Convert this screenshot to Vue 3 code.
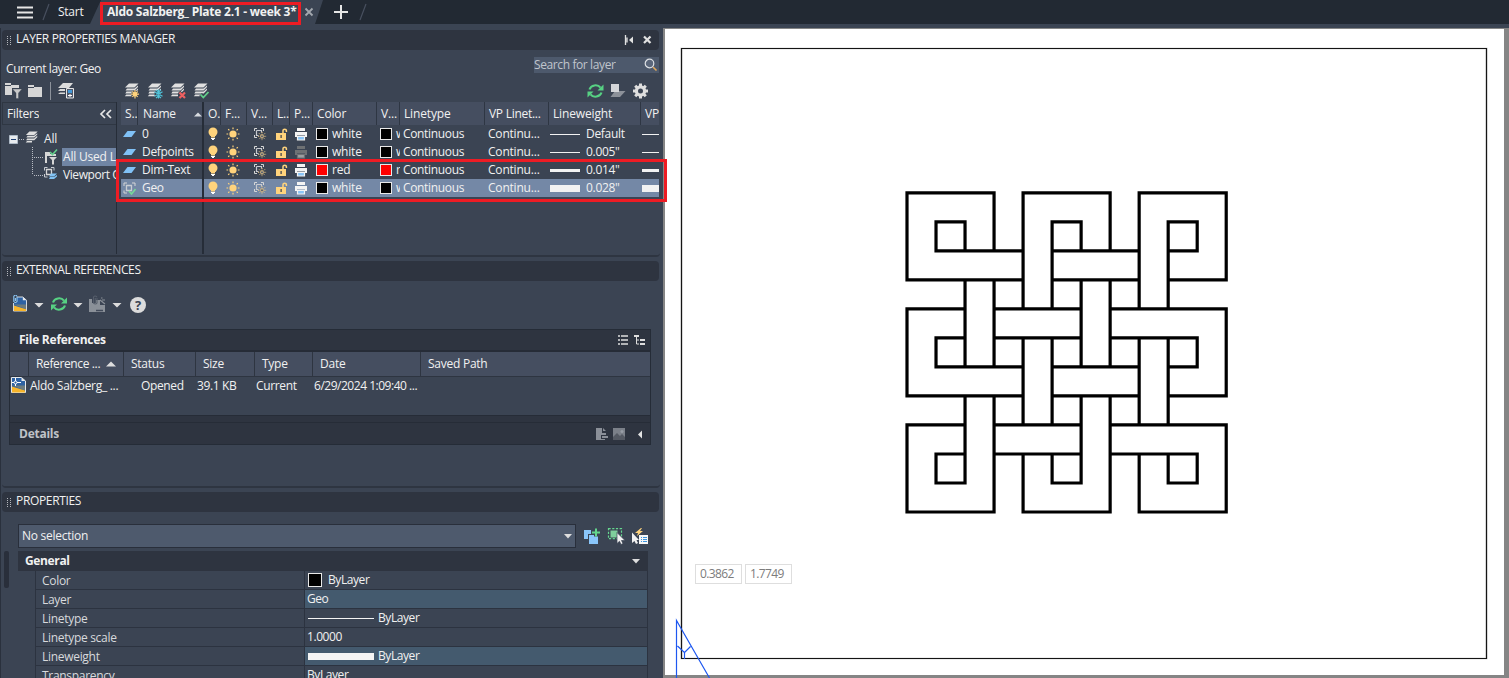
<script setup>
const columns = ['S..', 'Name', 'O.', 'F...', 'V...', 'L..', 'P...', 'Color', 'V...', 'Linetype', 'VP Linet...', 'Lineweight', 'VP']

const layers = [
  { name: '0', color: 'white', plot: true, weight: 'Default', thick: 1 },
  { name: 'Defpoints', color: 'white', plot: false, weight: '0.005"', thick: 1 },
  { name: 'Dim-Text', color: 'red', plot: true, weight: '0.014"', thick: 3 },
  { name: 'Geo', color: 'white', plot: true, weight: '0.028"', thick: 7, current: true }
]

const properties = [
  { label: 'Color', value: 'ByLayer', kind: 'chip' },
  { label: 'Layer', value: 'Geo', tint: true },
  { label: 'Linetype', value: 'ByLayer', kind: 'thin' },
  { label: 'Linetype scale', value: '1.0000' },
  { label: 'Lineweight', value: 'ByLayer', kind: 'thick', tint: true },
  { label: 'Transparency', value: 'ByLayer' }
]

// Edges of the interlaced knot on an 11 x 11 grid: for each line, its [from, to] runs.
const rowRuns = [
  [[0, 3], [4, 7], [8, 11]],
  [[1, 2], [5, 6], [9, 10]],
  [[1, 4], [5, 8], [9, 10]],
  [[0, 4], [5, 8], [9, 11]],
  [[0, 2], [3, 6], [7, 11]],
  [[1, 2], [3, 6], [7, 10]],
  [[1, 4], [5, 8], [9, 10]],
  [[0, 4], [5, 8], [9, 11]],
  [[0, 2], [3, 6], [7, 11]],
  [[1, 2], [3, 6], [7, 10]],
  [[1, 2], [5, 6], [9, 10]],
  [[0, 3], [4, 7], [8, 11]]
]
const columnRuns = [
  [[0, 3], [4, 7], [8, 11]],
  [[1, 2], [5, 6], [9, 10]],
  [[1, 2], [3, 6], [7, 10]],
  [[0, 2], [3, 6], [7, 11]],
  [[0, 4], [5, 8], [9, 11]],
  [[1, 4], [5, 8], [9, 10]],
  [[1, 2], [3, 6], [7, 10]],
  [[0, 2], [3, 6], [7, 11]],
  [[0, 4], [5, 8], [9, 11]],
  [[1, 4], [5, 8], [9, 10]],
  [[1, 2], [5, 6], [9, 10]],
  [[0, 3], [4, 7], [8, 11]]
]
const gx = n => (244 + n * 29.02).toFixed(2)
const gy = n => (164.8 + n * 29.02).toFixed(2)
const knot =
  rowRuns.flatMap((list, y) => list.map(([a, b]) => `M${gx(a)} ${gy(y)}H${gx(b)}`)).join('') +
  columnRuns.flatMap((list, x) => list.map(([a, b]) => `M${gx(x)} ${gy(a)}V${gy(b)}`)).join('')
</script>

<template>
  <div class="app">
    <svg class="defs" width="0" height="0">
      <symbol id="layers" viewBox="0 0 16 16">
        <path d="M5 .5h9.500l-4 4H1zM3 5.500h7.500L14 2.500v1.600L10.600 7.500H1.500zM2.500 8.500h8L14 5.500v1.600L10.600 10.500H1.300zM2.300 11.500H8v1.700H.8z" fill="#e0e0e0" />
      </symbol>
      <symbol id="refresh" viewBox="0 0 17 16">
        <path d="M2.500 6.500C4 2 10.500.8 13.500 4.600" fill="none" stroke="#57d183" stroke-width="2.100" />
        <path d="M16.500 1.500v6h-6z" fill="#57d183" />
        <path d="M14.500 9.500C13 14 6.500 15.200 3.500 11.400" fill="none" stroke="#57d183" stroke-width="2.100" />
        <path d="M.5 14.500v-6h6z" fill="#57d183" />
      </symbol>
      <symbol id="folder" viewBox="0 0 16 14">
        <path d="M0 1h6v2h8v10H0z" fill="#d6d6d6" /><path d="M0 3.500h6" stroke="#3b4453" />
      </symbol>
      <symbol id="bulb" viewBox="0 0 10 14">
        <circle cx="5" cy="5" r="4.500" fill="#ffd37c" /><path d="M3 8h4v2.500H3z" fill="#ffd37c" /><path d="M3 11h4v1H6v1H4v-1H3z" fill="#fff" />
      </symbol>
      <symbol id="sun" viewBox="0 0 14 14">
        <circle cx="7" cy="7" r="3.600" fill="#ffd37c" />
        <path d="M7 .5v1.700M7 11.800v1.700M.5 7h1.700M11.800 7h1.700M2.200 2.200l1.200 1.200M10.600 10.600l1.200 1.200M2.200 11.800l1.200-1.200M10.600 3.400l1.200-1.200" stroke="#ffd37c" stroke-width="1.200" />
      </symbol>
      <symbol id="vpfreeze" viewBox="0 0 14 14">
        <path d="M1.500 4V1.500H4M8 1.500h2.500V4M1.500 8v2.500H4" fill="none" stroke="#d6d6d6" stroke-width="1" />
        <path d="M3.500 3.500h5v2M3.500 3.500v5h2" fill="none" stroke="#c7cad0" stroke-width="1.200" />
        <path d="M9 5v8.500M5 9.300h8.500M6 6.300l6 6M12 6.300l-6 6" stroke="#e7c483" stroke-width="1" stroke-dasharray="1.300 .8" />
        <circle cx="9" cy="9.300" r="1.500" fill="#596273" stroke="#e7c483" stroke-width=".7" />
      </symbol>
      <symbol id="lock" viewBox="0 0 12 13">
        <path d="M0 5h10v7H0z" fill="#ffd37c" /><path d="M7 5V2.500Q7 1.300 8.700 1.300t1.700 1.200V4" fill="none" stroke="#ffd37c" stroke-width="1.500" /><path d="M4.500 7h1.200v3H4.500z" fill="#343c4a" />
      </symbol>
      <symbol id="printer" viewBox="0 0 14 13">
        <path d="M3 0h8v3H3zM1 4h12v5h-2V7.500H3V9H1z" fill="currentColor" /><path d="M3.500 8.500h7V12h-7z" fill="#8bc5f7" stroke="currentColor" stroke-width="1.200" />
      </symbol>
      <symbol id="drawing" viewBox="0 0 15 16">
        <path d="M.5.500h10L14.500 4v11.500H.5z" fill="#2e62a3" stroke="#e5e8eb" /><path d="M1 9.500l13 4v2H1z" fill="#f7b52b" /><path d="M1 8.500h13v5z" fill="#e2ab39" opacity=".35" /><path d="M10.500.5V4h4z" fill="#e5e8eb" />
      </symbol>
    </svg>

    <nav class="topbar">
      <svg class="tabs" width="400" height="28" viewBox="0 0 400 28">
        <path d="M101 0h222l-8 24v4H90v-4z" fill="#3b4453" />
        <path d="M17 7.500h16M17 12.500h16M17 17.500h16" stroke="#e6e6e6" stroke-width="2" />
        <path d="M49 4l-6 16M366 4l-6 16" stroke="#48505f" stroke-width="1.200" />
        <path d="M305.500 8.500l7 7M312.500 8.500l-7 7" stroke="#a3a8af" stroke-width="1.800" />
        <path d="M334 12h14M341 5v14" stroke="#e6e6e6" stroke-width="2" />
      </svg>
      <span class="tab start">Start</span>
      <span class="tab file">Aldo Salzberg_ Plate 2.1 - week 3*</span>
    </nav>

    <div class="workspace">
      <aside class="side">
        <section class="palette layer-palette">
          <header class="title">
            <i class="grip"></i><span>LAYER PROPERTIES MANAGER</span>
            <svg class="winctl" width="30" height="12" viewBox="0 0 30 12">
              <path d="M2.500 1v10M4 3.500v5" stroke="#e1e1e1" stroke-width="1.300" /><path d="M10 2.500v7L6 6z" fill="#e1e1e1" /><path d="M21 2.500l6.500 6.500M27.500 2.500L21 9" stroke="#e1e1e1" stroke-width="2.200" />
            </svg>
          </header>
          <div class="current">
            <span>Current layer: Geo</span>
            <div class="search">
              <span>Search for layer</span>
              <svg width="14" height="14" viewBox="0 0 14 14"><path d="M9 9l3.500 3.500" stroke="#e0a85c" stroke-width="1.600" /><circle cx="5.500" cy="5.500" r="4.300" fill="#5b677b" stroke="#dde0e4" stroke-width="1.200" /></svg>
            </div>
          </div>
          <div class="tools">
            <svg class="t1" width="19" height="16" viewBox="0 0 19 16"><path d="M1 0h6v2h8v3H8v7H1z" fill="#d6d6d6" /><path d="M1 2.500h6" stroke="#3b4453" /><path d="M8.500 6h9.500L14.500 10v5.500H12V10z" fill="#c9c9c9" stroke="#3b4453" stroke-width=".4" /></svg>
            <svg class="t2" width="16" height="14"><use href="#folder" /></svg>
            <i class="divider"></i>
            <svg class="t3" width="17" height="16" viewBox="0 0 17 16"><path d="M5 0h10l-4 5H0zM2 6h5v2H0zM2 9.500h5v1.500H0z" fill="#dcdcdc" /><path d="M8.500 5.500h7v9.500h-7z" fill="#4e5769" stroke="#e5e5e5" /><path d="M10 7h4v3h-4z" fill="#4399d9" /><path d="M10 12.500h4M12 11v3" stroke="#fff" /></svg>
            <svg class="t4" width="86" height="17" viewBox="0 0 86 17">
              <use href="#layers" width="16" height="16" /><use href="#layers" x="23" width="16" height="16" /><use href="#layers" x="46" width="16" height="16" /><use href="#layers" x="69" width="16" height="16" />
              <circle cx="11" cy="11.200" r="3.800" fill="#3b4453" />
              <path d="M11 7v8.500M7 11.200h8M8.300 8.500l5.400 5.400M13.700 8.500l-5.400 5.400" stroke="#ffd37c" stroke-width="1.200" /><circle cx="11" cy="11.200" r="2.200" fill="#ffd37c" />
              <circle cx="34.500" cy="11" r="4" fill="#3b4453" />
              <path d="M34.500 6.500v9M30.500 8.800l8 4.500M38.500 8.800l-8 4.500M32 7l2.500 2L37 7M32 15l2.500-2 2.500 2" fill="none" stroke="#50c4da" stroke-width="1.100" /><circle cx="34.500" cy="11" r="1.700" fill="none" stroke="#50c4da" />
              <path d="M55 9l6 6M61 9l-6 6" stroke="#3b4453" stroke-width="3.800" /><path d="M55.500 9.500l5.500 5.500M61 9.500L55.500 15" stroke="#ee6060" stroke-width="2.200" />
              <path d="M76.500 11.500l3 3L84.500 9" fill="none" stroke="#3b4453" stroke-width="4" /><path d="M76.500 11.500l2.800 3L84.500 9" fill="none" stroke="#62cf8b" stroke-width="1.800" />
            </svg>
            <svg class="t5" width="63" height="17" viewBox="0 0 63 17">
              <use href="#refresh" x="0" y="0" width="17" height="16" />
              <path d="M28 8h10.500l-5.500 6H23.500z" fill="#8c9199" /><path d="M24 1h8v8h-8z" fill="#d4d6d9" />
              <g fill="none" stroke="#dedede"><circle cx="53.500" cy="8" r="4.100" stroke-width="3.200" /><path d="M53.500.5v3M53.500 12.500v3M46 8h3M58 8h3M48.200 2.700l2 2M56.800 11.300l2 2M48.200 13.300l2-2M56.800 4.700l2-2" stroke-width="3" /></g>
            </svg>
          </div>

          <div class="layer-area">
            <div class="filters">
              <div class="filter-head"><span>Filters</span><svg width="13" height="10" viewBox="0 0 13 10"><path d="M6 1L2 5l4 4M12 1L8 5l4 4" fill="none" stroke="#e6e6e6" stroke-width="1.700" /></svg></div>
              <div class="tree">
                <svg class="twig" width="62" height="58" viewBox="0 0 62 58">
                  <path d="M7.500 10.500h8v8h-8z" fill="#e8ecef" stroke="#aebac7" /><path d="M9 14.500h5" stroke="#1d3f73" />
                  <path d="M17 14.500h6M30.500 22v28M32 32.500h10M32 50.500h10" stroke="#b8bcc4" stroke-dasharray="1 1" />
                  <use href="#layers" x="23" y="6" width="14" height="14" />
                  <path d="M43 27h5v2h6v2h-9v7h-2z" fill="#d6d6d6" /><path d="M47 32h8l-3 3v4.500h-2V35z" fill="#d6d6d6" /><path d="M48 27l2.500 2.500 4.500-5" fill="none" stroke="#62cf8b" stroke-width="1.600" />
                  <path d="M42.500 45.500v-3h3M49 42.500h3v3M42.500 49v3h3" fill="none" stroke="#c7cbd1" /><path d="M44.500 44.500h5v5h-5z" fill="none" stroke="#d6d6d6" stroke-width="1.300" /><path d="M49 48.500h6l-3 3h-5zM48 52h4l3-2v1.500L52 54h-5z" fill="#82c3f5" />
                </svg>
                <span class="n-all">All</span>
                <span class="n-used">All Used L</span>
                <span class="n-view">Viewport O</span>
              </div>
            </div>

            <div class="grid">
              <div class="row head">
                <span v-for="(c, i) in columns" :key="i" :class="'c' + i">{{ c }}</span>
                <svg class="sort" width="8" height="5"><path d="M0 4.500L4 .5l4 4z" fill="#d8dbe0" /></svg>
              </div>
              <div v-for="l in layers" :key="l.name" class="row" :class="{ selected: l.current }">
                <span class="ico status">
                  <svg v-if="!l.current" width="13" height="8" viewBox="0 0 13 8"><path d="M4.500 1H13L8.500 7H0z" fill="#80c1f6" /></svg>
                  <svg v-else width="13" height="13" viewBox="0 0 13 13"><path d="M1 4V1h3M9 1h3v3M1 8.500V11h3" fill="none" stroke="#d6d6d6" /><path d="M3.500 3.500h5v5h-5z" fill="none" stroke="#c9cdd3" stroke-width="1.300" /><path d="M6 9l2.500 3L12.500 7" fill="none" stroke="#75d997" stroke-width="1.600" /></svg>
                </span>
                <span class="name">{{ l.name }}</span>
                <span class="ico"><svg width="10" height="14"><use href="#bulb" /></svg></span>
                <span class="ico sun"><svg width="14" height="14"><use href="#sun" /></svg></span>
                <span class="ico"><svg width="14" height="14"><use href="#vpfreeze" /></svg></span>
                <span class="ico lock"><svg width="12" height="13"><use href="#lock" /></svg></span>
                <span class="ico plot" :class="{ off: !l.plot }"><svg width="14" height="13"><use href="#printer" /></svg></span>
                <span class="color"><i class="swatch" :class="l.color"></i>{{ l.color }}</span>
                <span class="color vp"><i class="swatch" :class="l.color"></i>{{ l.color }}</span>
                <span class="ltype">Continuous</span>
                <span class="ltype short">Continu...</span>
                <span class="weight"><i :style="{ height: l.thick + 'px' }"></i>{{ l.weight }}</span>
                <span class="weight tail"><i :style="{ height: l.thick + 'px' }"></i></span>
              </div>
            </div>
          </div>
        </section>

        <section class="palette xref">
          <header class="title"><i class="grip"></i><span>EXTERNAL REFERENCES</span></header>
          <div class="xtools">
            <svg width="140" height="20" viewBox="0 0 140 20">
              <use href="#drawing" x="3" y="1" width="14" height="16" /><path d="M2 0h5v8H2z" fill="#3b4453" /><path d="M7 2v4.500q-1.500 2-3.200 0V1.500q1.500-3 3.200 0M5.400 3v3" fill="none" stroke="#8dc9f8" stroke-width="1.100" />
              <path d="M24.500 8h9L29 12.500zM63.500 8h9L68 12.500zM102.500 8h9L107 12.500z" fill="#dcdcdc" />
              <use href="#refresh" x="40.500" y="1" width="17" height="16" />
              <path d="M79 4h3v4h4V5h4v5h5v2H79zM79 12h16v5H79z" fill="#8a9098" /><path d="M86 15.500h7" stroke="#414a59" stroke-width="1.500" /><path d="M87 3v5q-1.500 2-3.500 0V2q1.500-2 3.500 0M85.300 3v5" fill="none" stroke="#565e6b" stroke-width="1.100" /><path d="M90 5l5 4M91 3h1.500M92 5h3" stroke="#8a9098" stroke-width="1.200" />
              <circle cx="128" cy="10" r="8" fill="#dcdcdc" /><text x="128" y="15" text-anchor="middle" class="help">?</text>
            </svg>
          </div>
          <div class="files">
            <div class="files-head"><span>File References</span>
              <svg width="28" height="12" viewBox="0 0 28 12"><path d="M0 2h2M3 2h7M0 6h2M3 6h7M0 10h2M3 10h7" stroke="#dedede" stroke-width="1.400" /><path d="M16 2h5M22 6h5M22 10h5" stroke="#dedede" stroke-width="2" /><path d="M18.500 3v7H21M18.500 6H21" fill="none" stroke="#dedede" /></svg>
            </div>
            <div class="frow fhead"><span></span><span>Reference ... <svg width="10" height="6"><path d="M0 5.500L5 .5l5 5z" fill="#dedede" /></svg></span><span>Status</span><span>Size</span><span>Type</span><span>Date</span><span>Saved Path</span></div>
            <div class="frow fbody">
              <span><svg width="15" height="16" viewBox="0 0 15 16"><use href="#drawing" /><path d="M4.500 1v8M1 5.500h9" stroke="#fff" /><circle cx="4.500" cy="5.500" r="1.500" fill="#2e62a3" stroke="#fff" /></svg></span>
              <span>Aldo Salzberg_ ...</span><span>Opened</span><span>39.1 KB</span><span>Current</span><span>6/29/2024 1:09:40 ...</span><span></span>
            </div>
            <div class="splitter"></div>
            <div class="details"><span>Details</span>
              <svg width="48" height="12" viewBox="0 0 48 12"><path d="M0 0h6v5h4v2H5v4h4v1H0zM7 0l3 3H7zM6 8h6v2H6z" fill="#8a8f98" /><path d="M17 0h12v12H17z" fill="#7b8089" /><path d="M17 9l4-4 3 3 2-2 3 3v3H17z" fill="#545963" /><circle cx="26" cy="3.500" r="1.500" fill="#979ca5" /><path d="M46 2.500v8L42 6.500z" fill="#e3e3e3" /></svg>
            </div>
          </div>
        </section>

        <section class="palette props">
          <header class="title"><i class="grip"></i><span>PROPERTIES</span></header>
          <div class="select-row">
            <div class="combo"><span>No selection</span><svg width="8" height="5"><path d="M0 0h8L4 4.500z" fill="#dedede" /></svg></div>
            <svg width="66" height="17" viewBox="0 0 66 17">
              <path d="M0 2h7v4H4v5H0z" fill="#8ac6fa" /><path d="M5 7h9v9H5z" fill="#8ac6fa" /><path d="M8 4.500h8M12 .5v8" stroke="#3b4453" stroke-width="4" /><path d="M8 4.500h8M12 .5v8" stroke="#63d58c" stroke-width="2" />
              <path d="M24.500 .7h13v10h-13z" fill="none" stroke="#65d78f" stroke-width="1.200" stroke-dasharray="2.200 1.500" /><path d="M26.500 2.500h7v7h-7z" fill="#7fcf9c" /><path d="M33 4.500v11l2.500-2.200 1.500 3.200 2-1-1.500-3H41z" fill="#f2f2f2" stroke="#3b4453" stroke-width=".7" />
              <path d="M57 0l-6 5h3l-1 3 6-5h-3l2-3z" fill="#ffd37c" /><path d="M48 4.500v10.500l2.500-2 1.500 3 2-1-1.500-3H55z" fill="#f2f2f2" /><path d="M55 7h9v9h-9z" fill="#f6f6f6" /><path d="M57 9.500h1M59 9.500h4M57 11.500h1M59 11.500h4M57 13.500h1M59 13.500h4" stroke="#3c94de" />
            </svg>
          </div>
          <div class="prop-area">
            <i class="scroll"></i>
            <div class="general">
              <div class="ghead"><span>General</span><svg width="8" height="5"><path d="M0 0h8L4 4.500z" fill="#dedede" /></svg></div>
              <div v-for="p in properties" :key="p.label" class="prow">
                <span class="plabel">{{ p.label }}</span>
                <span class="pvalue" :class="[p.kind, { tint: p.tint }]"><i v-if="p.kind"></i>{{ p.value }}</span>
              </div>
            </div>
          </div>
        </section>
      </aside>

      <main class="canvas">
        <svg width="846" height="650" viewBox="0 0 846 650">
          <path d="M18.500 20.500h805v610h-805z" fill="none" stroke="#dedede" stroke-width="2" />
          <path d="M18.500 20.500h805v610h-805z" fill="none" stroke="#151515" stroke-width="1.200" />
          <path :d="knot" fill="none" stroke="#000" stroke-width="3.200" stroke-linecap="square" />
          <path d="M13.500 650v-57.500L46.500 650M14.500 618l7 6.500v6.500M21.500 624.500l6-6" fill="none" stroke="#1e58f0" stroke-width="1.200" />
        </svg>
        <div class="coords"><span>0.3862</span><span>1.7749</span></div>
      </main>
    </div>

    <i class="mark mark-tab"></i>
    <i class="mark mark-layers"></i>
  </div>
</template>

<style>
html, body { margin: 0; overflow: hidden; background: #3b4453; }
</style>

<style scoped>
.app { position: relative; width: 1509px; height: 678px; overflow: hidden; background: #3b4453; color: #f1f1f1; font: 12px/18px "Open Sans", "Noto Sans", sans-serif; letter-spacing: -0.25px; white-space: nowrap; }
.app * { box-sizing: border-box; }
.defs { position: absolute; }
svg { display: block; flex: none; }
span { overflow: hidden; }

.topbar { display: flex; position: relative; height: 28px; background: linear-gradient(#222933 24px, #3b4453 24px); }
.tabs { position: absolute; left: 0; top: 0; }
.tab { position: relative; line-height: 24px; height: 24px; }
.start { margin-left: 58px; width: 48px; }
.file { font-weight: 700; width: 196px; padding-left: 1px; letter-spacing: -0.25px; }

.workspace { display: flex; height: 650px; }
.side { width: 663px; border-left: 1px solid #2a313d; padding: 2px 0 0 1px; overflow: hidden; }
.title { display: flex; align-items: center; height: 20px; width: 657px; padding-left: 5px; border-radius: 4px; background: #2e3440; letter-spacing: -0.34px; }
.title span { flex: 1; line-height: 18px; height: 20px; padding-left: 4px; }
.grip { width: 5px; height: 10px; margin-top: 2px; background: repeating-linear-gradient(transparent 0 1px, #2e3440 1px 2px), repeating-linear-gradient(90deg, #b5b8bd 0 1px, #2e3440 1px 3px); }
.winctl { margin: -1px 6px 0 0; }
.layer-palette { height: 227px; width: 658px; border-bottom: 2px solid #2e3541; border-radius: 0 0 4px 4px; }

.current { display: flex; justify-content: space-between; height: 27px; padding: 7px 1px 0 4px; letter-spacing: -0.4px; }
.current > span { line-height: 23px; letter-spacing: -0.43px; }
.search { display: flex; justify-content: space-between; width: 125px; height: 16px; background: #4d596c; color: #c0c5cc; letter-spacing: -0.39px; }
.search span { line-height: 16px; }
.search svg { margin: 1px 1px 0 0; }

.tools { display: flex; align-items: center; height: 25px; padding: 3px 0 0 2px; }
.t2 { margin-left: 5px; }
.divider { width: 1px; height: 18px; margin: 0 7px 0 6px; background: #8c929b; }
.t4 { margin-left: 49px; }
.t5 { margin-left: 377px; }

.layer-area { display: flex; height: 152px; gap: 4px; }
.filters { width: 115px; border-right: 1px solid #262d38; }
.filter-head { display: flex; justify-content: space-between; height: 23px; padding: 1px 4px 0 4px; border: 1px solid #2f3743; border-right: 0; line-height: 20px; }
.filter-head svg { margin-top: 5px; }
.tree { position: relative; height: 60px; display: grid; grid-template-rows: 18px 18px 18px; padding-top: 5px; letter-spacing: -0.2px; }
.twig { position: absolute; left: 0; top: 0; }
.tree span { margin-left: 60px; padding-left: 1px; line-height: 18px; }
.tree .n-all { margin-left: 41px; }
.n-used { background: #7085a4; }
.n-view { letter-spacing: -0.42px; }

.grid { width: 538px; overflow: hidden; background: linear-gradient(#262d38, #262d38) 81px 0 / 2px 152px no-repeat; }
.row { display: grid; grid-template-columns: 17px 66px 17px 26px 26px 17px 23px 64px 23px 85px 64px 92px 18px; height: 18px; position: relative; }
.row.selected { background: linear-gradient(#262d38, #262d38) 81px 0 / 2px 18px no-repeat, #7488a6; }
.head { height: 23px; background: #454e60; }
.head span { padding-left: 4px; line-height: 24px; border-right: 1px solid #2e3643; letter-spacing: -0.15px; }
.head .c1 { border-right: 2px solid #262d38; padding-left: 5px; }
.head .c10 { letter-spacing: -0.28px; }
.head .c12 { border: 0; }
.sort { position: absolute; left: 73px; top: 10px; }
.ico { display: flex; align-items: center; justify-content: center; height: 18px; }
.ico.sun { padding-right: 2px; }
.ico.lock { padding-right: 0; }
.ico.plot { padding-right: 1px; }
.plot { color: #f4f4f4; }
.plot.off { color: #7a818d; }
.plot.off svg { opacity: .75; filter: grayscale(1); }
.name { padding-left: 4px; letter-spacing: -0.3px; }
.color { display: flex; align-items: center; gap: 4px; padding-left: 3px; letter-spacing: -0.2px; }
.swatch { flex: none; width: 12px; height: 12px; border: 1px solid #e9e9e9; background: #000; }
.swatch.red { background: #f00; }
.ltype { padding-left: 3px; letter-spacing: -0.34px; }
.ltype.short { letter-spacing: -0.2px; }
.weight { display: flex; align-items: center; gap: 6px; padding-left: 1px; letter-spacing: -0.3px; }
.weight i { flex: none; width: 30px; background: #f2f2f2; }

.xref { padding-top: 4px; height: 231px; width: 658px; border-bottom: 2px solid #2e3541; border-radius: 0 0 4px 4px; }
.xtools { padding: 14px 0 0 8px; height: 48px; }
.help { font: 700 13px "Open Sans", sans-serif; fill: #3b4453; }
.files { width: 642px; margin-left: 7px; border: 1px solid #252c37; background: #2e3440; }
.files-head, .details { display: flex; justify-content: space-between; align-items: center; height: 22px; padding: 0 4px 0 9px; font-weight: 700; border-bottom: 2px solid #262c37; letter-spacing: -0.25px; }
.frow { display: grid; grid-template-columns: 19px 95px 72px 59px 58px 108px 1fr; height: 24px; background: #454e60; }
.fhead span { border-right: 1px solid #2e3541; padding-left: 7px; line-height: 24px; }
.fhead span:last-child { border: 0; }
.fhead span:nth-child(2) { display: flex; gap: 6px; align-items: center; letter-spacing: -0.37px; }
.fbody { height: 39px; background: #3b4453; border-top: 1px solid #2e3541; letter-spacing: -0.35px; }
.fbody span { line-height: 18px; padding-left: 1px; }
.fbody span:first-child { padding: 0 0 0 1px; }
.fbody span:nth-child(2) { letter-spacing: -0.29px; }
.fbody span:nth-child(3) { padding-left: 17px; }
.fbody span:nth-child(6) { letter-spacing: -0.48px; }
.splitter { height: 8px; border: solid #262c37; border-width: 1px 0; }
.details { border: 0; color: #bfc2c7; height: 21px; padding-right: 6px; }

.props { padding-top: 4px; height: 200px; overflow: hidden; }
.select-row { display: flex; padding: 12px 0 0 16px; gap: 8px; align-items: center; height: 36px; }
.combo { display: flex; justify-content: space-between; align-items: center; width: 558px; height: 24px; padding: 0 3px; border: 1px solid #292f3b; background: #4e5a6d; letter-spacing: -0.26px; }
.prop-area { display: flex; padding-top: 3px; }
.scroll { width: 5px; height: 37px; margin: 0 9px 0 2px; border-radius: 2px; background: #292f3b; }
.general { width: 630px; }
.ghead { display: flex; align-items: center; justify-content: space-between; height: 20px; padding: 0 8px 0 7px; font-weight: 700; background: #2e3440; letter-spacing: -0.35px; }
.prow { display: grid; grid-template-columns: 269px 1fr; height: 19px; margin-left: 17px; border: solid #2c3340; border-width: 0 1px 1px; }
.plabel { padding-left: 6px; color: #d8dadd; line-height: 20px; border-right: 1px solid #2c3340; letter-spacing: -0.3px; }
.pvalue { display: flex; align-items: center; padding-left: 2px; line-height: 18px; letter-spacing: -0.42px; }
.tint { background: #445a6e; }
.pvalue i { width: 66px; margin: 0 4px 0 1px; height: 1px; background: #f4f4f4; }
.pvalue.thick i { height: 7px; }
.pvalue.chip i { width: 14px; height: 14px; margin-right: 6px; background: #000; border: 1px solid #e8e8e8; }

.canvas { position: relative; width: 846px; height: 650px; background: #fff; border: solid #858585; border-width: 1px 5px 3px 2px; }
.canvas > svg { position: absolute; left: -2px; top: -1px; }
.coords { position: absolute; left: 30px; top: 535px; display: flex; gap: 3px; color: #7c7c7c; letter-spacing: -0.6px; }
.coords span { width: 47px; height: 20px; padding-left: 4px; border: 1px solid #dedede; background: #fff; line-height: 18px; }

.mark { position: absolute; border: 3px solid #ed1c24; }
.mark-tab { left: 100px; top: 2px; width: 201px; height: 23px; }
.mark-layers { left: 116px; top: 159px; width: 551px; height: 43px; }
</style>
